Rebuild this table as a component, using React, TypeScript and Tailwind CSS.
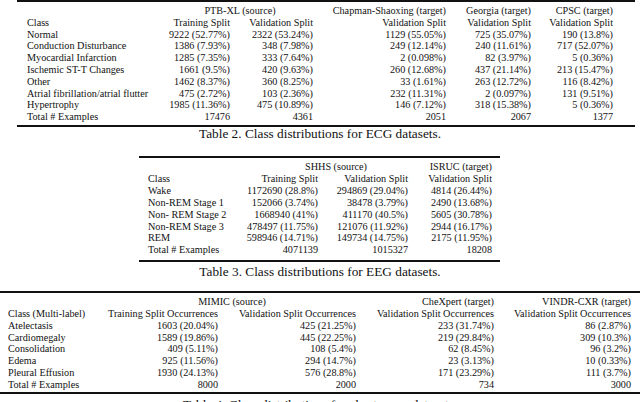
import React from 'react';

type Row = string[];

const ecgRows: Row[] = [
  ['Normal', '9222 (52.77%)', '2322 (53.24%)', '1129 (55.05%)', '725 (35.07%)', '190 (13.8%)'],
  ['Conduction Disturbance', '1386 (7.93%)', '348 (7.98%)', '249 (12.14%)', '240 (11.61%)', '717 (52.07%)'],
  ['Myocardial Infarction', '1285 (7.35%)', '333 (7.64%)', '2 (0.098%)', '82 (3.97%)', '5 (0.36%)'],
  ['Ischemic ST-T Changes', '1661 (9.5%)', '420 (9.63%)', '260 (12.68%)', '437 (21.14%)', '213 (15.47%)'],
  ['Other', '1462 (8.37%)', '360 (8.25%)', '33 (1.61%)', '263 (12.72%)', '116 (8.42%)'],
  ['Atrial fibrillation/atrial flutter', '475 (2.72%)', '103 (2.36%)', '232 (11.31%)', '2 (0.097%)', '131 (9.51%)'],
  ['Hypertrophy', '1985 (11.36%)', '475 (10.89%)', '146 (7.12%)', '318 (15.38%)', '5 (0.36%)'],
  ['Total # Examples', '17476', '4361', '2051', '2067', '1377'],
];

const eegRows: Row[] = [
  ['Wake', '1172690 (28.8%)', '294869 (29.04%)', '4814 (26.44%)'],
  ['Non-REM Stage 1', '152066 (3.74%)', '38478 (3.79%)', '2490 (13.68%)'],
  ['Non- REM Stage 2', '1668940 (41%)', '411170 (40.5%)', '5605 (30.78%)'],
  ['Non-REM Stage 3', '478497 (11.75%)', '121076 (11.92%)', '2944 (16.17%)'],
  ['REM', '598946 (14.71%)', '149734 (14.75%)', '2175 (11.95%)'],
  ['Total # Examples', '4071139', '1015327', '18208'],
];

const cxrRows: Row[] = [
  ['Atelectasis', '1603 (20.04%)', '425 (21.25%)', '233 (31.74%)', '86 (2.87%)'],
  ['Cardiomegaly', '1589 (19.86%)', '445 (22.25%)', '219 (29.84%)', '309 (10.3%)'],
  ['Consolidation', '409 (5.11%)', '108 (5.4%)', '62 (8.45%)', '96 (3.2%)'],
  ['Edema', '925 (11.56%)', '294 (14.7%)', '23 (3.13%)', '10 (0.33%)'],
  ['Pleural Effusion', '1930 (24.13%)', '576 (28.8%)', '171 (23.29%)', '111 (3.7%)'],
  ['Total # Examples', '8000', '2000', '734', '3000'],
];

const DataRows = ({ rows }: { rows: Row[] }) => (
  <>
    {rows.map((r, i) =>
      r.map((cell, j) => (
        <div key={`${i}-${j}`} className={j === 0 ? 'text-left whitespace-nowrap' : 'text-right whitespace-nowrap'}>
          {cell}
        </div>
      ))
    )}
  </>
);

export default function App() {
  return (
    <div className="w-[640px] h-[402px] overflow-hidden bg-white text-[#111] [font-family:'Liberation_Serif',serif] text-[10.2px]">
      {/* Table 2 — ECG */}
      <div className="ml-[17px] w-[618px] border-t-2 border-b-2 border-[#111] pl-[10px] pt-[3px] pb-[2px] leading-[11.8px]">
        <div className="grid grid-cols-[128px_75px_83px_133px_85px_82px]">
          <div />
          <div className="col-span-2 text-center pl-[12px]">PTB-XL (source)</div>
          <div className="text-right whitespace-nowrap">Chapman-Shaoxing (target)</div>
          <div className="text-right whitespace-nowrap">Georgia (target)</div>
          <div className="text-right whitespace-nowrap">CPSC (target)</div>

          <div>Class</div>
          <div className="text-right whitespace-nowrap">Training Split</div>
          <div className="text-right whitespace-nowrap">Validation Split</div>
          <div className="text-right whitespace-nowrap">Validation Split</div>
          <div className="text-right whitespace-nowrap">Validation Split</div>
          <div className="text-right whitespace-nowrap">Validation Split</div>

          <DataRows rows={ecgRows} />
        </div>
      </div>
      <p className="text-center text-[13.3px] leading-[13px]">Table 2. Class distributions for ECG datasets.</p>

      {/* Table 3 — EEG */}
      <div className="mt-[16px] ml-[139px] w-[361px] border-t-2 border-b-2 border-[#111] pl-[9px] pt-[3px] pb-[4px] leading-[11.9px]">
        <div className="grid grid-cols-[92px_78px_90px_84px]">
          <div />
          <div className="col-span-2 text-center pl-[24px]">SHHS (source)</div>
          <div className="text-right whitespace-nowrap">ISRUC (target)</div>

          <div>Class</div>
          <div className="text-right whitespace-nowrap">Training Split</div>
          <div className="text-right whitespace-nowrap">Validation Split</div>
          <div className="text-right whitespace-nowrap">Validation Split</div>

          <DataRows rows={eegRows} />
        </div>
      </div>
      <p className="text-center text-[13.3px] leading-[13px] mt-[3px]">Table 3. Class distributions for EEG datasets.</p>

      {/* Table 4 — chest x-ray */}
      <div className="mt-[13px] w-[640px] border-t-2 border-b-2 border-[#111] pl-[8px] pt-[3px] pb-[1px] leading-[11.8px]">
        <div className="grid grid-cols-[92px_118px_138px_138px_137px]">
          <div />
          <div className="col-span-2 text-center pl-[8px]">MIMIC (source)</div>
          <div className="text-right whitespace-nowrap">CheXpert (target)</div>
          <div className="text-right whitespace-nowrap">VINDR-CXR (target)</div>

          <div className="whitespace-nowrap">Class (Multi-label)</div>
          <div className="text-right whitespace-nowrap">Training Split Occurrences</div>
          <div className="text-right whitespace-nowrap">Validation Split Occurrences</div>
          <div className="text-right whitespace-nowrap">Validation Split Occurrences</div>
          <div className="text-right whitespace-nowrap">Validation Split Occurrences</div>

          <DataRows rows={cxrRows} />
        </div>
      </div>
      <p className="text-center text-[13.3px] leading-[13px] mt-[4px]">Table 4. Class distributions for chest x-ray datasets.</p>
    </div>
  );
}
